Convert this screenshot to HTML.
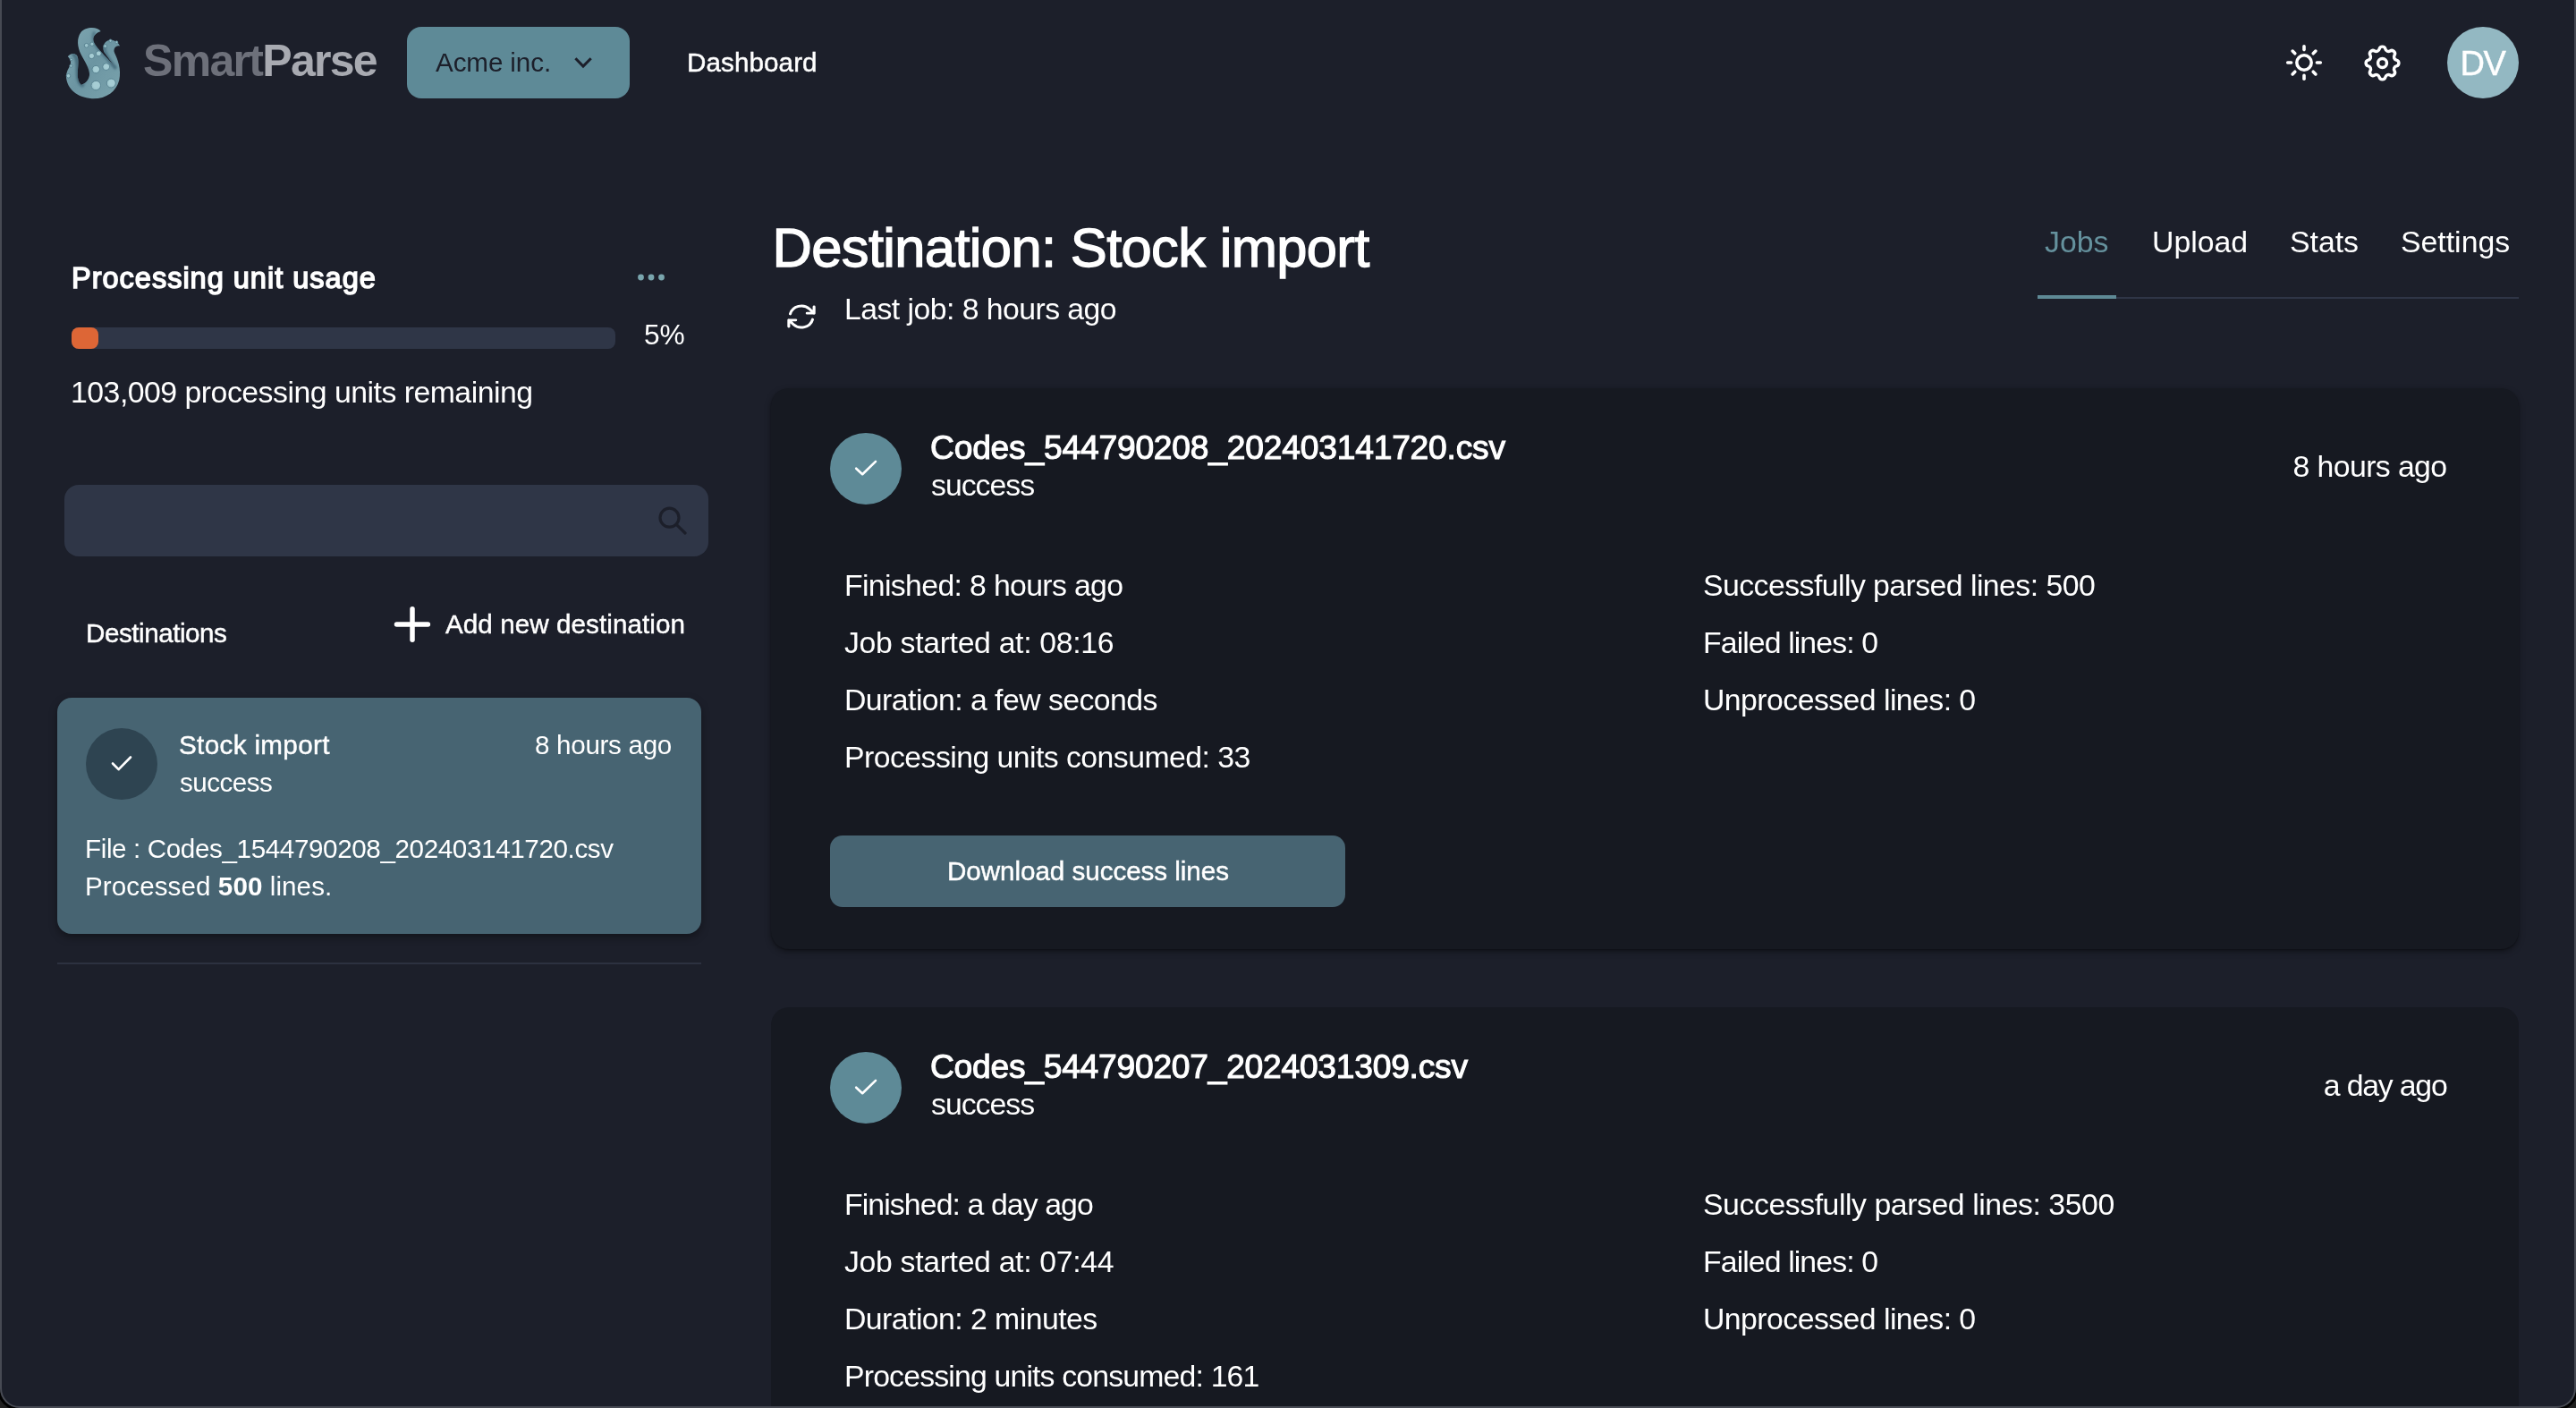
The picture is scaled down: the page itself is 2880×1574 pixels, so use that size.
<!DOCTYPE html>
<html><head><meta charset="utf-8">
<style>
html,body{margin:0;padding:0;}
body{width:2880px;height:1574px;overflow:hidden;background:#1c1f2a;position:relative;font-family:"Liberation Sans",sans-serif;color:#ffffff;}
#frame{position:absolute;left:0;top:-40px;width:2880px;height:1614px;box-sizing:border-box;border:2px solid #474a53;border-radius:22px;box-shadow:0 0 0 3px #000,0 0 0 60px #202020;}
.a{position:absolute;white-space:nowrap;line-height:1;}
.r{position:absolute;}
.b{letter-spacing:-0.55px;}
.m{-webkit-text-stroke:0.45px currentColor;}
</style></head><body>
<div id="page" class="r" style="left:0;top:0;width:2880px;height:1574px;will-change:transform;">

<!-- header -->
<svg class="r" style="left:66px;top:24px" width="76" height="92" viewBox="0 0 76 92" id="logo"><defs><linearGradient id="lg" x1="0" y1="0" x2="1" y2="1"><stop offset="0" stop-color="#7fa7b2"/><stop offset="0.5" stop-color="#6c95a2"/><stop offset="1" stop-color="#7aa3ad"/></linearGradient></defs><path d="M 46.7,11.1 C 42.5,5.2 29.4,5.9 24.2,12.4 C 19.6,19.0 20.3,28.1 24.8,37.3 C 29.4,45.8 34.6,53.6 34.0,60.1 C 33.3,66.0 28.8,69.9 24.8,70.9 C 21.6,68.0 20.3,62.7 20.9,55.6 C 21.6,47.1 22.2,40.5 19.6,37.6 C 17.0,34.6 11.8,35.9 9.8,39.2 C 12.7,41.8 14.1,45.8 12.1,49.7 C 9.8,53.6 7.2,58.8 8.2,64.1 C 9.8,75.2 19.6,85.0 36.6,86.3 C 52.3,86.9 64.1,78.4 67.3,65.4 C 69.9,53.6 65.4,41.8 62.1,35.3 C 60.1,30.7 63.4,26.1 68.0,27.5 C 65.4,21.6 58.8,19.6 54.2,21.6 C 49.7,24.2 48.4,28.8 50.3,34.0 L 62.7,51.0 C 55.6,42.5 45.8,34.0 40.5,26.1 C 36.6,20.3 37.3,14.4 46.7,11.1 Z" fill="url(#lg)"/><filter id="lb" x="-20%" y="-20%" width="140%" height="140%"><feGaussianBlur stdDeviation="1.3"/></filter><clipPath id="lc"><path d="M 46.7,11.1 C 42.5,5.2 29.4,5.9 24.2,12.4 C 19.6,19.0 20.3,28.1 24.8,37.3 C 29.4,45.8 34.6,53.6 34.0,60.1 C 33.3,66.0 28.8,69.9 24.8,70.9 C 21.6,68.0 20.3,62.7 20.9,55.6 C 21.6,47.1 22.2,40.5 19.6,37.6 C 17.0,34.6 11.8,35.9 9.8,39.2 C 12.7,41.8 14.1,45.8 12.1,49.7 C 9.8,53.6 7.2,58.8 8.2,64.1 C 9.8,75.2 19.6,85.0 36.6,86.3 C 52.3,86.9 64.1,78.4 67.3,65.4 C 69.9,53.6 65.4,41.8 62.1,35.3 C 60.1,30.7 63.4,26.1 68.0,27.5 C 65.4,21.6 58.8,19.6 54.2,21.6 C 49.7,24.2 48.4,28.8 50.3,34.0 L 62.7,51.0 C 55.6,42.5 45.8,34.0 40.5,26.1 C 36.6,20.3 37.3,14.4 46.7,11.1 Z"/></clipPath><g clip-path="url(#lc)"><g filter="url(#lb)" fill="none" stroke-linecap="round">
<path d="M 16.3,36.6 C 21.6,40.5 20.9,49.7 20.9,57.5 C 20.9,64.1 22.9,69.3 26.1,71.2" stroke="#3f6272" stroke-width="4.5" opacity="0.75"/>
<path d="M 39.2,13.1 C 36.6,19.6 40.5,27.5 45.8,32.7 L 62.7,51.6" stroke="#4a6f80" stroke-width="4" opacity="0.7"/>
<path d="M 51.0,28.1 C 49.7,34.0 56.2,42.5 62.7,51.6" stroke="#45697a" stroke-width="3.5" opacity="0.7"/>
<path d="M 32.7,51.0 C 34.6,57.5 32.7,66.0 26.1,71.2" stroke="#55798a" stroke-width="2.5" opacity="0.5"/>
</g></g><g fill="#9cc4cc" stroke="#56808e" stroke-width="0.9"><circle cx="30.7" cy="26.8" r="2.4"/><circle cx="36.9" cy="25.2" r="2.1"/><circle cx="36.3" cy="38.6" r="3.1"/><circle cx="44.1" cy="35.9" r="2.9"/><circle cx="41.2" cy="53.6" r="4.2"/><circle cx="52.6" cy="50.7" r="3.9"/><circle cx="41.2" cy="71.6" r="5.2"/><circle cx="58.2" cy="69.0" r="5.0"/><circle cx="13.7" cy="42.5" r="1.3"/><circle cx="13.4" cy="49.7" r="1.6"/><circle cx="10.5" cy="60.8" r="2.3"/><circle cx="51.6" cy="27.5" r="1.8"/><circle cx="57.5" cy="21.6" r="1.6"/><circle cx="64.4" cy="23.2" r="1.4"/></g><g fill="#a6cdd4"><circle cx="36.6" cy="38.3" r="2.2"/><circle cx="44.5" cy="35.7" r="2.1"/><circle cx="41.7" cy="53.2" r="3.0"/><circle cx="53.1" cy="50.3" r="2.8"/><circle cx="41.8" cy="71.0" r="3.8"/><circle cx="58.8" cy="68.5" r="3.6"/></g></svg>
<div class="a" id="t_smart" style="left:160px;top:42.5px;font-size:50px;font-weight:700;letter-spacing:-1.7px;"><span style="color:#6d707a">Smart</span><span style="color:#a8aab1">Parse</span></div>
<div class="r" style="left:455px;top:30px;width:249px;height:80px;border-radius:16px;background:#5e8a97;"></div>
<div class="a" id="t_acme" style="left:487px;top:55px;font-size:29.6px;color:#1c1f2a;letter-spacing:-0.1px;">Acme inc.</div>
<svg class="r" style="left:636px;top:56px" width="32" height="28" viewBox="636 56 32 28"><path d="M643.4 65.3 L652 74 L660.7 65.3" fill="none" stroke="#1c1f2a" stroke-width="3"/></svg>
<div class="a m" id="t_dash" style="left:768px;top:55px;font-size:29.6px;letter-spacing:0.1px;">Dashboard</div>

<svg class="r" style="left:2546px;top:40px" width="60" height="60" viewBox="-30 -30 60 60">
<circle cx="0" cy="0" r="8.2" fill="none" stroke="#fff" stroke-width="3.5"/>
<g stroke="#fff" stroke-width="3.6" stroke-linecap="round">
<line x1="0" y1="-14.4" x2="0" y2="-18.3"/><line x1="0" y1="14.4" x2="0" y2="18.3"/>
<line x1="-14.4" y1="0" x2="-18.3" y2="0"/><line x1="14.4" y1="0" x2="18.3" y2="0"/>
<line x1="-10.2" y1="-10.2" x2="-12.9" y2="-12.9"/><line x1="10.2" y1="-10.2" x2="12.9" y2="-12.9"/>
<line x1="-10.2" y1="10.2" x2="-12.9" y2="12.9"/><line x1="10.2" y1="10.2" x2="12.9" y2="12.9"/>
</g></svg>
<svg class="r" style="left:2639.1px;top:45.7px" width="49" height="49" viewBox="0 0 24 24"><path d="M10.325 4.317c.426 -1.756 2.924 -1.756 3.35 0a1.724 1.724 0 0 0 2.573 1.066c1.543 -.94 3.31 .826 2.37 2.37a1.724 1.724 0 0 0 1.065 2.572c1.756 .426 1.756 2.924 0 3.35a1.724 1.724 0 0 0 -1.066 2.573c.94 1.543 -.826 3.31 -2.37 2.37a1.724 1.724 0 0 0 -2.572 1.065c-.426 1.756 -2.924 1.756 -3.35 0a1.724 1.724 0 0 0 -2.573 -1.066c-1.543 .94 -3.31 -.826 -2.37 -2.37a1.724 1.724 0 0 0 -1.065 -2.572c-1.756 -.426 -1.756 -2.924 0 -3.35a1.724 1.724 0 0 0 1.066 -2.573c-.94 -1.543 .826 -3.31 2.37 -2.37c1 .608 2.296 .07 2.572 -1.065z" fill="none" stroke="#fff" stroke-width="1.7" stroke-linejoin="round"/><circle cx="12" cy="12" r="2.42" fill="none" stroke="#fff" stroke-width="1.7"/></svg>
<div class="r" style="left:2736px;top:30px;width:80px;height:80px;border-radius:50%;background:#93b8c2;"></div>
<div class="a m" id="t_dv" style="left:2750.5px;top:52px;font-size:38px;letter-spacing:-1.4px;">DV</div>

<!-- sidebar -->
<div class="a" id="t_pu" style="left:80px;top:294.5px;font-size:32.5px;font-weight:400;letter-spacing:1px;-webkit-text-stroke:1.5px #fff;">Processing unit usage</div>
<svg class="r" style="left:700px;top:300px" width="60" height="20" viewBox="700 300 60 20"><g fill="#79a5ad"><circle cx="716.5" cy="310" r="3.4"/><circle cx="728" cy="310" r="3.4"/><circle cx="739.5" cy="310" r="3.4"/></g></svg>
<div class="r" style="left:80px;top:366px;width:608px;height:24px;border-radius:8px;background:#2f3647;"></div>
<div class="r" style="left:80px;top:366px;width:30px;height:24px;border-radius:8px;background:#dd6636;"></div>
<div class="a" id="t_5" style="left:720px;top:359px;font-size:31.7px;">5%</div>
<div class="a" id="t_rem" style="left:79px;top:422px;font-size:33.8px;letter-spacing:-0.5px;">103,009 processing units remaining</div>

<div class="r" style="left:72px;top:542px;width:720px;height:80px;border-radius:16px;background:#2f3647;"></div>
<svg class="r" style="left:726px;top:556px" width="50" height="50" viewBox="726 556 50 50"><circle cx="748.5" cy="578.7" r="10.5" fill="none" stroke="#1c1f2a" stroke-width="3.2"/><line x1="756.5" y1="586.7" x2="766" y2="596" stroke="#1c1f2a" stroke-width="3.2" stroke-linecap="round"/></svg>

<div class="a m" id="t_dest" style="left:96px;top:693px;font-size:29.6px;letter-spacing:-0.45px;">Destinations</div>
<svg class="r" style="left:436px;top:673px" width="50" height="50" viewBox="436 673 50 50"><g stroke="#fff" stroke-width="5.5" stroke-linecap="round"><line x1="461" y1="680.7" x2="461" y2="715.2"/><line x1="443.5" y1="698" x2="478.4" y2="698"/></g></svg>
<div class="a m" id="t_add" style="left:498px;top:683px;font-size:29.6px;letter-spacing:0.08px;">Add new destination</div>

<div class="r" style="left:64px;top:780px;width:720px;height:264px;border-radius:16px;background:#476472;box-shadow:0 4px 10px rgba(0,0,0,0.35);"></div>
<div class="r" style="left:96px;top:814px;width:80px;height:80px;border-radius:50%;background:#2e4451;"></div>
<svg class="r" style="left:116px;top:834px" width="40" height="40" viewBox="116 834 40 40"><path d="M126 853.5 L132.6 860.2 L146 846.5" fill="none" stroke="#fff" stroke-width="2.6" stroke-linecap="round" stroke-linejoin="round"/></svg>
<div class="a m" id="t_si" style="left:200px;top:818px;font-size:29.6px;letter-spacing:0.36px;">Stock import</div>
<div class="a" id="t_suc1" style="left:201px;top:860px;font-size:29.6px;letter-spacing:-0.5px;">success</div>
<div class="a" id="t_8h1" style="left:598px;top:818px;font-size:29.6px;letter-spacing:-0.3px;">8 hours ago</div>
<div class="a" id="t_file" style="left:95px;top:934px;font-size:29.6px;letter-spacing:-0.37px;">File : Codes_1544790208_202403141720.csv</div>
<div class="a" id="t_proc" style="left:95px;top:976px;font-size:29.6px;letter-spacing:0.08px;">Processed <b>500</b> lines.</div>
<div class="r" style="left:64px;top:1076px;width:720px;height:2px;background:#2c3140;"></div>

<!-- main -->
<div class="a" id="t_title" style="left:863.5px;top:246px;font-size:61.5px;letter-spacing:-0.66px;-webkit-text-stroke:1.3px #fff;">Destination: Stock import</div>
<svg class="r" style="left:876px;top:334px" width="40" height="40" viewBox="0 0 24 24"><g transform="translate(12 12) scale(0.94 0.87) translate(-12 -12)"><path d="M16.023 9.348h4.992v-.001M2.985 19.644v-4.992m0 0h4.992m-4.993 0 3.181 3.183a8.25 8.25 0 0 0 13.803-3.7M4.031 9.865a8.25 8.25 0 0 1 13.803-3.7l3.181 3.182m0-4.991v4.99" fill="none" stroke="#fff" stroke-width="2" stroke-linecap="round" stroke-linejoin="round"/></g></svg>
<div class="a" id="t_last" style="left:944px;top:329px;font-size:33.8px;letter-spacing:-0.55px;">Last job: 8 hours ago</div>

<div class="a" id="t_jobs" style="left:2286px;top:254px;font-size:33.8px;color:#65919d;">Jobs</div>
<div class="a" id="t_upl" style="left:2406px;top:254px;font-size:33.8px;">Upload</div>
<div class="a" id="t_stats" style="left:2560px;top:254px;font-size:33.8px;">Stats</div>
<div class="a" id="t_set" style="left:2684px;top:254px;font-size:33.8px;">Settings</div>
<div class="r" style="left:2278px;top:332px;width:538px;height:2px;background:#2f3546;"></div>
<div class="r" style="left:2278px;top:330px;width:88px;height:4px;background:#5e8995;"></div>

<!-- card 1 -->
<div class="r" style="left:862px;top:434px;width:1954px;height:627px;border-radius:20px;background:#161921;box-shadow:0 3px 7px rgba(0,0,0,0.38),0 1px 2px rgba(0,0,0,0.3);"></div>
<div class="r" style="left:928px;top:484px;width:80px;height:80px;border-radius:50%;background:#5e8a97;"></div>
<svg class="r" style="left:948px;top:504px" width="40" height="40" viewBox="948 504 40 40"><path d="M957.2 523.7 L964.2 530.2 L979 515.9" fill="none" stroke="#fff" stroke-width="2.6" stroke-linecap="round" stroke-linejoin="round"/></svg>
<div class="a" id="t_c1" style="left:1040px;top:481.5px;font-size:37.2px;font-weight:400;letter-spacing:-0.2px;-webkit-text-stroke:1.1px #fff;">Codes_544790208_202403141720.csv</div>
<div class="a" id="t_c1s" style="left:1041px;top:526px;font-size:33.8px;letter-spacing:-1px;">success</div>
<div class="a" id="t_c1t" style="right:144.5px;letter-spacing:-0.6px;top:505px;font-size:33.8px;">8 hours ago</div>
<div class="a b" style="left:944px;top:637.5px;font-size:33.8px;letter-spacing:-0.65px;">Finished: 8 hours ago</div>
<div class="a b" style="left:944px;top:701.5px;font-size:33.8px;letter-spacing:-0.33px;">Job started at: 08:16</div>
<div class="a b" style="left:944px;top:765.5px;font-size:33.8px;">Duration: a few seconds</div>
<div class="a b" style="left:944px;top:829.5px;font-size:33.8px;">Processing units consumed: 33</div>
<div class="a b" style="left:1904px;top:637.5px;font-size:33.8px;">Successfully parsed lines: 500</div>
<div class="a b" style="left:1904px;top:701.5px;font-size:33.8px;letter-spacing:-0.9px;">Failed lines: 0</div>
<div class="a b" style="left:1904px;top:765.5px;font-size:33.8px;">Unprocessed lines: 0</div>
<div class="r" style="left:928px;top:934px;width:576px;height:80px;border-radius:14px;background:#476472;"></div>
<div class="a m" id="t_dl" style="left:1059px;top:958.5px;font-size:29.6px;letter-spacing:-0.04px;">Download success lines</div>

<!-- card 2 -->
<div class="r" style="left:862px;top:1126px;width:1954px;height:627px;border-radius:20px;background:#161921;"></div>
<div class="r" style="left:928px;top:1176px;width:80px;height:80px;border-radius:50%;background:#5e8a97;"></div>
<svg class="r" style="left:948px;top:1196px" width="40" height="40" viewBox="948 504 40 40"><path d="M957.2 523.7 L964.2 530.2 L979 515.9" fill="none" stroke="#fff" stroke-width="2.6" stroke-linecap="round" stroke-linejoin="round"/></svg>
<div class="a" id="t_c2" style="left:1040px;top:1173.5px;font-size:37.2px;font-weight:400;letter-spacing:-0.24px;-webkit-text-stroke:1.1px #fff;">Codes_544790207_2024031309.csv</div>
<div class="a" style="left:1041px;top:1218px;font-size:33.8px;letter-spacing:-1px;">success</div>
<div class="a" id="t_c2t" style="right:144.5px;letter-spacing:-1.2px;top:1197px;font-size:33.8px;">a day ago</div>
<div class="a b" style="left:944px;top:1329.5px;font-size:33.8px;letter-spacing:-0.9px;">Finished: a day ago</div>
<div class="a b" style="left:944px;top:1393.5px;font-size:33.8px;letter-spacing:-0.33px;">Job started at: 07:44</div>
<div class="a b" style="left:944px;top:1457.5px;font-size:33.8px;">Duration: 2 minutes</div>
<div class="a b" style="left:944px;top:1521.5px;font-size:33.8px;letter-spacing:-0.83px;">Processing units consumed: 161</div>
<div class="a b" style="left:1904px;top:1329.5px;font-size:33.8px;letter-spacing:-0.44px;">Successfully parsed lines: 3500</div>
<div class="a b" style="left:1904px;top:1393.5px;font-size:33.8px;letter-spacing:-0.9px;">Failed lines: 0</div>
<div class="a b" style="left:1904px;top:1457.5px;font-size:33.8px;">Unprocessed lines: 0</div>
</div>
<div id="frame"></div>
</body></html>
